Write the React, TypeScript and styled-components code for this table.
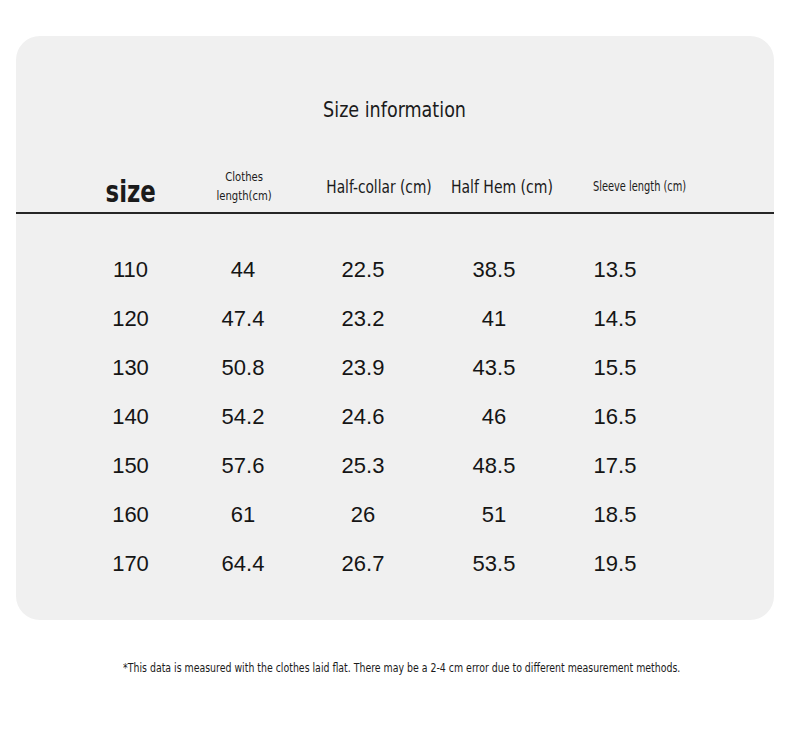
import React from "react";
import styled, { createGlobalStyle } from "styled-components";

const Global = createGlobalStyle`
  html, body { margin: 0; padding: 0; background: #ffffff; }
  body { font-family: "Liberation Sans", Arial, sans-serif; color: #1b1b1b; }
`;

const condensed = `"DejaVu Sans Condensed", "DejaVu Sans", sans-serif`;

const Page = styled.div`
  width: 790px;
  padding: 36px 16px 0;
  box-sizing: border-box;
`;

const Card = styled.section`
  background: #f0f0f0;
  border-radius: 24px;
  padding: 59px 0 32px;
`;

/* The reference uses a narrow grotesk; squeeze DejaVu Sans Condensed to its width */
const Squeeze = styled.span<{ $sx: number }>`
  display: inline-block;
  white-space: nowrap;
  transform: scaleX(${(p) => p.$sx});
  transform-origin: center;
`;

const Title = styled.h1`
  margin: 0;
  text-align: center;
  font-family: ${condensed};
  font-weight: 400;
  font-size: 22px;
  line-height: 30px;
  color: #1b1b1b;
`;

const HeaderRow = styled.div`
  margin-top: 35px;
  height: 52px;
  display: grid;
  grid-template-columns: 100px 126px 145px 100px 175px;
  padding-left: 65px;
  align-items: center;
  border-bottom: 2px solid #262626;
`;

const HeadCell = styled.div<{ $size: number; $big?: boolean }>`
  display: flex;
  justify-content: center;
  text-align: center;
  white-space: nowrap;
  font-family: ${condensed};
  font-size: ${(p) => p.$size}px;
  font-weight: ${(p) => (p.$big ? 700 : 400)};
  line-height: ${(p) => (p.$big ? "33px" : "19px")};
  color: #1b1b1b;
  ${(p) => (p.$big ? "align-self: end; padding-bottom: 4px;" : "")}
`;

const Body = styled.div`
  margin-top: 31px;
`;

const DataRow = styled.div`
  display: grid;
  grid-template-columns: 113px 112px 128px 134px 108px;
  padding-left: 58px;
  height: 49px;
  align-items: center;
`;

const DataCell = styled.div`
  text-align: center;
  font-family: "Liberation Sans", Arial, sans-serif;
  font-size: 22px;
  line-height: 49px;
  color: #151515;
`;

const Note = styled.p`
  margin: 41px 0 0 14px;
  text-align: center;
  font-family: ${condensed};
  font-size: 12.5px;
  line-height: 14px;
  color: #1b1b1b;
`;

const rows: string[][] = [
  ["110", "44", "22.5", "38.5", "13.5"],
  ["120", "47.4", "23.2", "41", "14.5"],
  ["130", "50.8", "23.9", "43.5", "15.5"],
  ["140", "54.2", "24.6", "46", "16.5"],
  ["150", "57.6", "25.3", "48.5", "17.5"],
  ["160", "61", "26", "51", "18.5"],
  ["170", "64.4", "26.7", "53.5", "19.5"],
];

export default function App() {
  return (
    <>
      <Global />
      <Page>
        <Card>
          <Title>
            <Squeeze $sx={0.887}>Size information</Squeeze>
          </Title>
          <HeaderRow>
            <HeadCell $big $size={31}>
              <Squeeze $sx={0.82}>size</Squeeze>
            </HeadCell>
            <HeadCell $size={13}>
              <Squeeze $sx={0.86}>
                Clothes
                <br />
                length(cm)
              </Squeeze>
            </HeadCell>
            <HeadCell $size={18}>
              <Squeeze $sx={0.85}>Half-collar (cm)</Squeeze>
            </HeadCell>
            <HeadCell $size={18}>
              <Squeeze $sx={0.865}>Half Hem (cm)</Squeeze>
            </HeadCell>
            <HeadCell $size={13.5}>
              <Squeeze $sx={0.81}>Sleeve length (cm)</Squeeze>
            </HeadCell>
          </HeaderRow>
          <Body>
            {rows.map((r) => (
              <DataRow key={r[0]}>
                {r.map((v, i) => (
                  <DataCell key={i}>{v}</DataCell>
                ))}
              </DataRow>
            ))}
          </Body>
        </Card>
        <Note>
          <Squeeze $sx={0.835}>
            *This data is measured with the clothes laid flat. There may be a 2-4 cm error due to different measurement methods.
          </Squeeze>
        </Note>
      </Page>
    </>
  );
}
